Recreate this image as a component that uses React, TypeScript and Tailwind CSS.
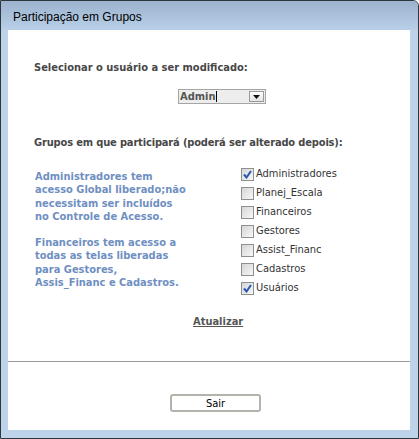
import { useState } from 'react'

const grupos = [
  { nome: 'Administradores', marcado: true },
  { nome: 'Planej_Escala', marcado: false },
  { nome: 'Financeiros', marcado: false },
  { nome: 'Gestores', marcado: false },
  { nome: 'Assist_Financ', marcado: false },
  { nome: 'Cadastros', marcado: false },
  { nome: 'Usuários', marcado: true },
]

function Checkbox({ checked }: { checked: boolean }) {
  return (
    <div className="w-[13px] h-[13px] shrink-0 border border-[#8e8f8f] bg-gradient-to-br from-[#d6d6d6] to-[#f7f7f7] flex items-center justify-center">
      {checked && (
        <svg width="9" height="9" viewBox="0 0 9 9">
          <path d="M1 4.5 L3.5 7.5 L8 1" fill="none" stroke="#2b57b5" strokeWidth="2" />
        </svg>
      )}
    </div>
  )
}

export default function App() {
  const [marcados, setMarcados] = useState(grupos.map((g) => g.marcado))

  return (
    <div className="w-[419px] h-[439px] border border-[#2e3640] rounded-tr-[6px] bg-[#bdd3ea] flex flex-col overflow-hidden">
      {/* Title bar */}
      <div className="h-[29px] shrink-0 bg-gradient-to-b from-[#9cb2cd] to-[#b9d0e9] flex items-center pl-[12px] pt-[2px]">
        <span className="text-[12px] text-black font-['Liberation_Sans',sans-serif]">Participação em Grupos</span>
      </div>

      {/* Content */}
      <div className="flex-1 ml-[7px] mr-[8px] mb-[8px] bg-white flex flex-col font-['DejaVu_Sans_Condensed','DejaVu_Sans',sans-serif]">
        <div className="pl-[26px] pt-[31px] text-[11px] font-bold text-[#474747] leading-[13px]">
          Selecionar o usuário a ser modificado:
        </div>

        <div className="pl-[170px] pt-[15px]">
          <div className="w-[88px] h-[15px] border border-[#a5a5a5] bg-[#ededed] flex items-center">
            <span className="pl-[1px] text-[11px] font-bold text-[#555] leading-[13px]">Admin</span>
            <span className="w-[1px] h-[11px] bg-black" />
            <div className="ml-auto mr-[1px] w-[15px] h-[11px] border border-[#9a9a9a] bg-gradient-to-b from-white to-[#e3e3e3] flex items-center justify-center">
              <svg width="7" height="4" viewBox="0 0 7 4">
                <path d="M0 0 H7 L3.5 4 Z" fill="#111" />
              </svg>
            </div>
          </div>
        </div>

        <div className="pl-[26px] pt-[32px] text-[11px] font-bold text-[#474747] leading-[13px] tracking-[-0.15px]">
          Grupos em que participará (poderá ser alterado depois):
        </div>

        <div className="flex pt-[19px]">
          <div className="pl-[27px] w-[233px] text-[11px] font-bold text-[#6f8fc2] leading-[13.3px] pt-[2px]">
            <p>
              Administradores tem
              <br />
              acesso Global liberado;não
              <br />
              necessitam ser incluídos
              <br />
              no Controle de Acesso.
            </p>
            <p className="mt-[13px]">
              Financeiros tem acesso a
              <br />
              todas as telas liberadas
              <br />
              para Gestores,
              <br />
              Assis_Financ e Cadastros.
            </p>
          </div>
          <div className="flex flex-col">
            {grupos.map((g, i) => (
              <div
                key={g.nome}
                className="h-[19px] flex items-start gap-[2px] cursor-default"
                onClick={() => setMarcados(marcados.map((m, j) => (j === i ? !m : m)))}
              >
                <Checkbox checked={marcados[i]} />
                <span className="text-[11px] text-[#333] leading-[13px] -mt-[1px]">{g.nome}</span>
              </div>
            ))}
          </div>
        </div>

        <div className="pl-[185px] pt-[7px]">
          <span className="text-[11px] font-bold text-[#555] underline leading-[13px]">Atualizar</span>
        </div>

        <div className="mt-[29px] h-[1px] bg-[#9a9a9a]" />

        <div className="pl-[162px] pt-[32px]">
          <button className="w-[91px] h-[18px] rounded-[3px] border-2 border-[#b3b3ab] bg-white flex items-center justify-center">
            <span className="text-[11px] text-black leading-[13px]">Sair</span>
          </button>
        </div>
      </div>
    </div>
  )
}
